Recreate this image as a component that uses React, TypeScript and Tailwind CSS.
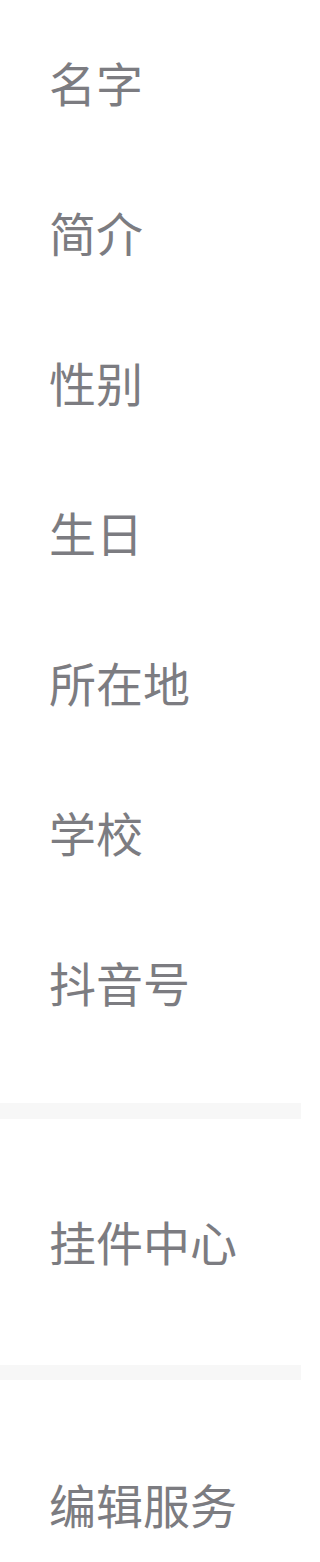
const profileRows = ['名字', '简介', '性别', '生日', '所在地', '学校', '抖音号'];

function Row({ label, className = 'h-[150px]' }: { label: string; className?: string }) {
  return (
    <div className={`flex items-center pl-[49px] pb-[4px] ${className}`}>
      <span className="text-[47px] font-normal leading-none text-[#7c7c81]">{label}</span>
    </div>
  );
}

export default function App() {
  return (
    <div
      className="w-[301px] h-[1562px] overflow-hidden bg-white"
      style={{ fontFamily: '"Noto Sans CJK SC", "Noto Sans", sans-serif' }}
    >
      <div className="pt-[8px] pb-[45px]">
        {profileRows.map(label => (
          <Row key={label} label={label} />
        ))}
      </div>
      <div className="h-[16px] bg-[#f7f7f7]" />
      <Row label="挂件中心" className="h-[246px]" />
      <div className="h-[15px] bg-[#f7f7f7]" />
      <Row label="编辑服务" className="h-[250px]" />
    </div>
  );
}
